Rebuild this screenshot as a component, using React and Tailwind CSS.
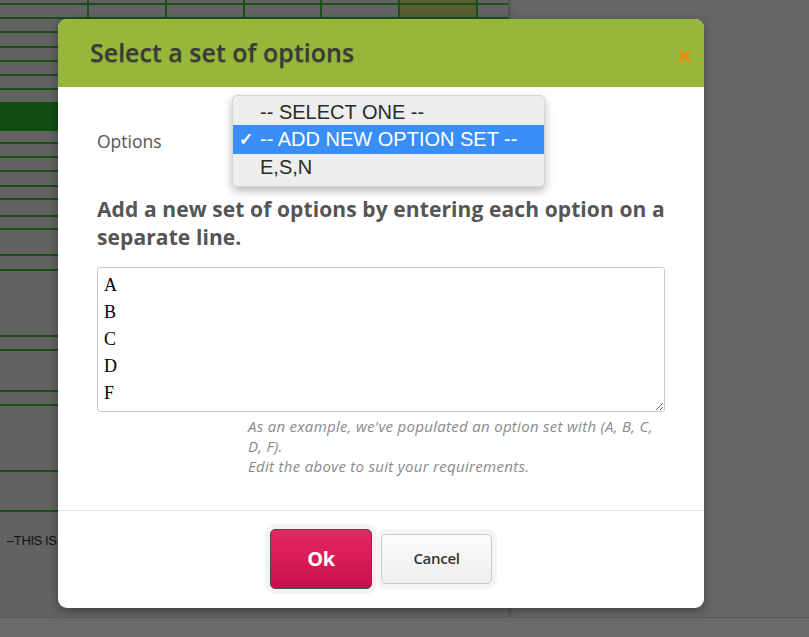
import React from "react";

const lineRows = [
  [5, "line"],
  [14, "line"],
  [14, "line"],
  [15, "line"],
  [14, "line"],
  [14, "line"],
  [14, "line"],
  [12, "plain"],
  [29, "band"],
  [13, "line"],
  [14, "line"],
  [14, "line"],
  [15, "line"],
  [13, "line"],
  [17, "line"],
  [13, "line"],
  [26, "line"],
  [15, "line"],
  [66, "line"],
  [14, "line"],
  [41, "line"],
  [14, "line"],
  [66, "line"],
  [40, "line"],
];

function BackgroundPage() {
  return (
    <div className="w-[508px] h-[617px] bg-[#626262] shadow-[2px_0_4px_rgba(0,0,0,0.25)] flex flex-col overflow-hidden">
      {lineRows.map(([h, kind], i) => {
        if (kind === "band")
          return <div key={i} style={{ height: h }} className="bg-[#0f4d12] shrink-0" />;
        if (kind === "plain") return <div key={i} style={{ height: h }} className="shrink-0" />;
        return (
          <div
            key={i}
            style={{ height: h }}
            className={"shrink-0 border-b-2 border-[#1a4f1b] " + (i < 2 ? "flex" : "")}
          >
            {i < 2 && (
              <>
                <div className="w-[89px] border-r-2 border-[#1a4f1b]" />
                <div className="w-[78px] border-r-2 border-[#1a4f1b]" />
                <div className="w-[78px] border-r-2 border-[#1a4f1b]" />
                <div className="w-[77px] border-r-2 border-[#1a4f1b]" />
                <div className="w-[78px] border-r-2 border-[#1a4f1b]" />
                <div className="w-[78px] border-r-2 border-[#1a4f1b] bg-[#575f30]" />
              </>
            )}
          </div>
        );
      })}
      <div className="pl-[6px] pt-[19px] text-[13px] text-[#111] font-['Liberation_Sans',Arial,sans-serif] tracking-[-0.4px]">
        --THIS IS
      </div>
    </div>
  );
}

export default function App() {
  return (
    <div className="relative w-[809px] h-[637px] overflow-hidden bg-[#666666] font-['Open_Sans',sans-serif]">
      <BackgroundPage />
      <div className="h-[20px] border-t border-[#5b5b5b] bg-[#6a6a6a]" />

      {/* Modal */}
      <div className="absolute left-[58px] top-[19px] w-[646px] h-[589px] bg-white rounded-[9px] shadow-[0_3px_10px_rgba(0,0,0,0.35)] flex flex-col">
        <div className="h-[68px] shrink-0 bg-[#97b73a] rounded-t-[9px] flex items-center justify-between pl-[32px] pr-[13px]">
          <h1 className="text-[25px] leading-none text-[#3a3a3a] font-semibold [text-shadow:0_1px_1px_rgba(0,0,0,0.25)] pb-[2px]">
            Select a set of options
          </h1>
          <svg width="13" height="13" viewBox="0 0 13 13" className="mt-[7px]">
            <path d="M2 2 L11 11 M11 2 L2 11" stroke="#ea8a16" strokeWidth="3.2" strokeLinecap="round" />
          </svg>
        </div>

        <div className="flex-1 flex flex-col px-[39px]">
          <div className="relative h-[108px] shrink-0">
            <div className="absolute left-0 top-[43px] text-[17.5px] leading-[22px] text-[#555]">
              Options
            </div>
            {/* open native select popup */}
            <div className="absolute left-[135px] top-[8px] w-[313px] h-[92px] bg-[#eeeeee] rounded-[5px] border border-[#d6d6d6] shadow-[0_4px_10px_rgba(0,0,0,0.28)] py-[3px] font-['Liberation_Sans',Arial,sans-serif] text-[20px] text-[#2a2a2a]">
              <div className="h-[26px] leading-[26px] pl-[27px]">-- SELECT ONE --</div>
              <div className="h-[29px] leading-[29px] bg-[#3a8ef7] text-white flex items-center">
                <span className="w-[27px] pl-[6px] text-[17px] font-bold">✓</span>
                <span>-- ADD NEW OPTION SET --</span>
              </div>
              <div className="h-[27px] leading-[27px] pl-[27px]">E,S,N</div>
            </div>
          </div>

          <h2 className="text-[21px] leading-[28px] font-bold text-[#555] w-[574px] tracking-[0.1px]">
            Add a new set of options by entering each option on a separate line.
          </h2>

          <textarea
            readOnly
            className="mt-[16px] w-[568px] h-[145px] border border-[#c9c9c9] rounded-[3px] pl-[6px] pt-[4px] text-[18px] leading-[27px] text-black font-['Liberation_Serif',serif] resize-y outline-none"
            defaultValue={"A\nB\nC\nD\nF"}
          />

          <div className="ml-[151px] w-[422px] mt-[4px] text-[15px] leading-[20px] italic text-[#8a8a8a] tracking-[0.3px]">
            <p>As an example, we've populated an option set with (A, B, C, D, F).</p>
            <p>Edit the above to suit your requirements.</p>
          </div>
        </div>

        <div className="h-[98px] shrink-0 border-t border-[#e3e3e3] flex items-center justify-center gap-[9px] pb-[2px]">
          <button className="w-[102px] h-[60px] rounded-[5px] border border-[#4a4a4a] bg-gradient-to-b from-[#e6265f] to-[#c9104e] ring-[5px] ring-[#f4f4f4] text-white text-[20px] font-bold tracking-[-0.5px]">
            Ok
          </button>
          <button className="w-[111px] h-[50px] rounded-[5px] border border-[#c8c8c8] bg-gradient-to-b from-[#fcfcfc] to-[#eeeeee] ring-[5px] ring-[#f5f5f5] text-[#333] text-[15px] font-semibold tracking-[-0.3px]">
            Cancel
          </button>
        </div>
      </div>
    </div>
  );
}
